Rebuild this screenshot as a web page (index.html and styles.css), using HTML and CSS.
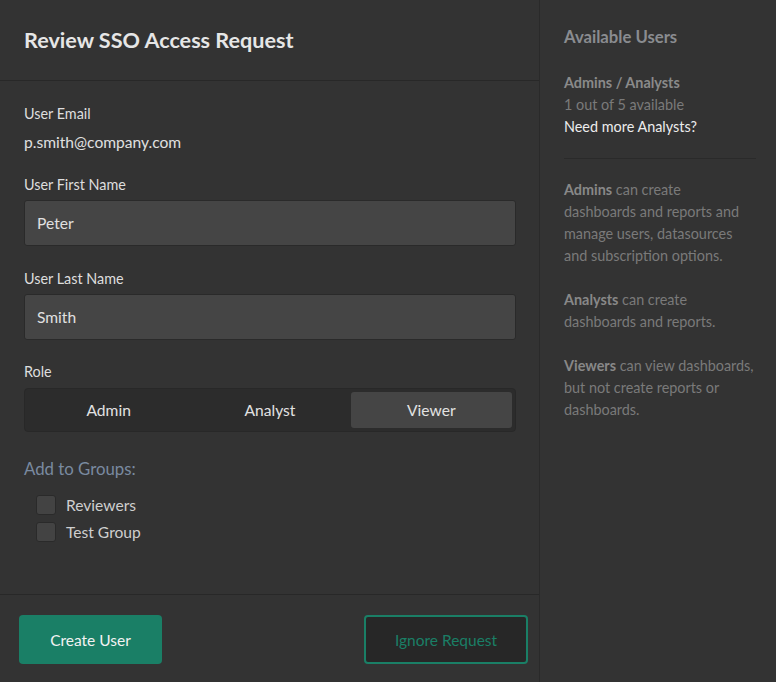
FILE: index.html
```html
<!DOCTYPE html>
<html>
<head>
<meta charset="utf-8">
<link rel="stylesheet" href="styles.css">
</head>
<body>
<div class="app">
  <div class="main">
    <div class="header"><h1 class="title">Review SSO Access Request</h1></div>
    <div class="form">
      <div class="label">User Email</div>
      <div class="value">p.smith@company.com</div>
      <div class="label mt">User First Name</div>
      <div class="input">Peter</div>
      <div class="label mt2">User Last Name</div>
      <div class="input">Smith</div>
      <div class="label mt">Role</div>
      <div class="segment">
        <div class="seg">Admin</div>
        <div class="seg">Analyst</div>
        <div class="seg active">Viewer</div>
      </div>
      <div class="groups-title">Add to Groups:</div>
      <div class="checks">
        <div class="check"><span class="box"></span><span>Reviewers</span></div>
        <div class="check"><span class="box"></span><span>Test Group</span></div>
      </div>
    </div>
    <div class="footer">
      <button class="btn primary">Create User</button>
      <button class="btn outline">Ignore Request</button>
    </div>
  </div>
  <div class="side">
    <div class="side-title">Available Users</div>
    <div class="side-block">
      <div class="b">Admins / Analysts</div>
      <div>1 out of 5 available</div>
      <div class="link">Need more Analysts?</div>
    </div>
    <div class="rule"></div>
    <p class="desc"><b>Admins</b> can create dashboards and reports and manage users, datasources and subscription options.</p>
    <p class="desc"><b>Analysts</b> can create dashboards and reports.</p>
    <p class="desc"><b>Viewers</b> can view dashboards, but not create reports or dashboards.</p>
  </div>
</div>
</body>
</html>
```

FILE: styles.css
```css
html, body {
  margin: 0;
  padding: 0;
  background: #333333;
  font-family: Lato, "Open Sans", sans-serif;
  color: #e2e2e2;
}
.app {
  display: flex;
  width: 776px;
  height: 682px;
}
.main {
  width: 539px;
  border-right: 1px solid #2a2a2a;
  display: flex;
  flex-direction: column;
}
.header {
  height: 80px;
  border-bottom: 1px solid #282828;
  display: flex;
  align-items: center;
  padding: 0 24px;
}
.title {
  margin: 0;
  font-size: 21.6px;
  font-weight: 700;
  color: #e6e6e6;
  line-height: 26px;
}
.form {
  flex: 1;
  padding: 23px 23px 0 24px;
}
.label {
  font-size: 14.4px;
  line-height: 20px;
  color: #dedede;
}
.label.mt { margin-top: 22px; }
.label.mt2 { margin-top: 23px; }
.value {
  margin-top: 7px;
  font-size: 15.6px;
  line-height: 22px;
  color: #e0e0e0;
}
.input {
  margin-top: 5px;
  box-sizing: border-box;
  height: 46px;
  border: 1px solid #2a2a2a;
  border-radius: 3px;
  background: #454545;
  padding: 0 12px;
  display: flex;
  align-items: center;
  font-size: 15.6px;
  color: #e0e0e0;
}
.segment {
  margin-top: 6px;
  height: 44px;
  box-sizing: border-box;
  border: 1px solid #282828;
  border-radius: 4px;
  background: #2c2c2c;
  padding: 3px;
  display: flex;
}
.seg {
  flex: 1;
  display: flex;
  align-items: center;
  justify-content: center;
  font-size: 15.6px;
  color: #e2e2e2;
  border-radius: 3px;
}
.seg.active {
  background: #454545;
}
.groups-title {
  margin-top: 25px;
  font-size: 16.8px;
  line-height: 24px;
  color: #7a8aa0;
}
.checks {
  margin-top: 14px;
  padding-left: 12px;
  display: flex;
  flex-direction: column;
  gap: 7px;
}
.check {
  display: flex;
  align-items: center;
  gap: 10px;
  font-size: 15.6px;
  line-height: 20px;
  color: #cfcfcf;
}
.box {
  width: 20px;
  height: 20px;
  box-sizing: border-box;
  border: 1px solid #2a2a2a;
  border-radius: 3px;
  background: #434343;
}
.footer {
  border-top: 1px solid #282828;
  padding: 20px 11px 18px 19px;
  display: flex;
  justify-content: space-between;
  align-items: center;
}
.btn {
  font-family: Lato, "Open Sans", sans-serif;
  font-size: 15.5px;
  height: 49px;
  border-radius: 4px;
  cursor: pointer;
}
.btn.primary {
  width: 143px;
  background: #1a7f66;
  border: none;
  color: #f2f2f2;
}
.btn.outline {
  width: 164px;
  background: #272727;
  border: 2px solid #1a7f66;
  color: #1a7f66;
}
.side {
  flex: 1;
  padding: 26px 20px 0 24px;
}
.side-title {
  font-size: 16.7px;
  font-weight: 700;
  line-height: 22px;
  color: #8a8c90;
}
.side-block {
  margin-top: 24px;
  font-size: 14.4px;
  line-height: 22px;
  color: #7a7a7a;
}
.side-block .b {
  font-weight: 700;
  color: #8a8a8a;
}
.side-block .link {
  color: #ececec;
}
.rule {
  margin-top: 20px;
  height: 1px;
  background: #2a2a2a;
}
.desc {
  width: 191px;
  margin: 20px 0 0 0;
  font-size: 14.4px;
  line-height: 22px;
  color: #7a7a7a;
}
.desc + .desc { margin-top: 22px; }
.desc b {
  font-weight: 700;
  color: #888888;
}
```
